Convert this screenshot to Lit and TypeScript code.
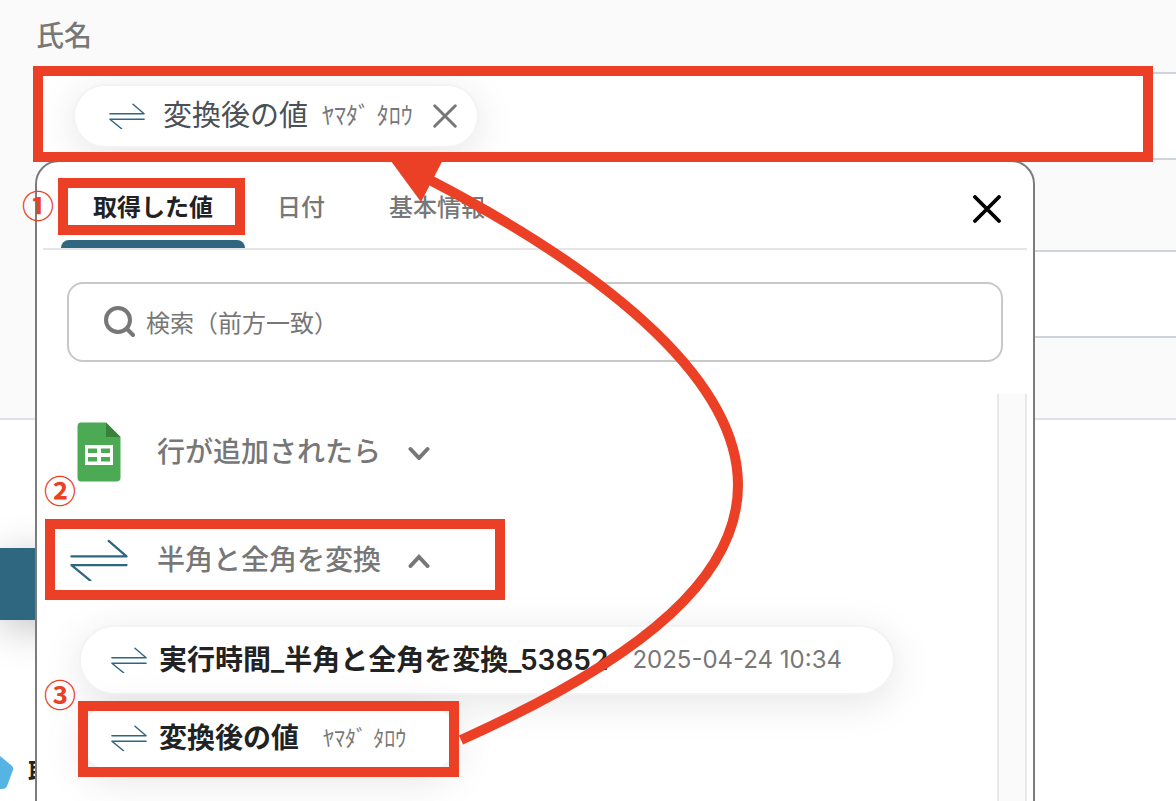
import { LitElement, html, css, svg } from "lit";
import { customElement, property } from "lit/decorators.js";
import { classMap } from "lit/directives/class-map.js";

@customElement("swap-icon")
class SwapIcon extends LitElement {
  static styles = css`
    :host { display: inline-flex; flex: none; }
    svg { display: block; width: 100%; height: auto; }
    path { fill: none; stroke: #2f6680; stroke-width: 2.4; stroke-linecap: round; stroke-linejoin: round; }
  `;
  render() {
    return html`<svg viewBox="0 0 60 44" aria-hidden="true">
      <path d="M1.500 18H58.500L40 2M58.500 27H1.500L21 43" />
    </svg>`;
  }
}

@customElement("value-pill")
class ValuePill extends LitElement {
  @property() name = "";
  @property() sample = "";
  @property({ type: Boolean }) kana = false;
  static styles = css`
    :host { display: inline-flex; }
    .pill {
      display: flex; align-items: center; box-sizing: border-box; height: 70px;
      padding: 0 51px 0 30px; border: 2px solid #f3f3f3; border-radius: 35px; background: #fff;
      box-shadow: 0 8px 40px rgba(0, 0, 0, 0.1); font: inherit; color: #222; cursor: pointer; white-space: pre;
    }
    .icon { width: 36px; margin-right: 12px; }
    .name { font-size: 28px; font-weight: 600; }
    .sample { font-size: 24px; color: #777; margin-left: 24px; }
    .kana { font-size: 22px; }
  `;
  render() {
    return html`<button class="pill" type="button">
      <swap-icon class="icon"></swap-icon><span class="name">${this.name}</span><span class=${classMap({ sample: true, kana: this.kana })}>${this.sample}</span>
    </button>`;
  }
}

@customElement("app-root")
class AppRoot extends LitElement {
  static styles = css`
    :host {
      display: block; position: relative; min-height: 100vh; overflow: hidden; background: #fff; color: #777;
      font-family: Inter, "Noto Sans CJK JP", sans-serif; font-size: 24px; line-height: 36px;
    }
    * { box-sizing: border-box; }
    button { font: inherit; color: inherit; background: none; border: 0; padding: 0; cursor: pointer; }
    svg { display: block; flex: none; }
    .form { background: #fafafa; border-bottom: 2px solid #dee2e6; padding: 16px 0 80px 35px; }
    .label { display: block; font-size: 28px; line-height: 40px; font-weight: 500; margin-bottom: 16px; padding-left: 1px; }
    .field {
      height: 88px; margin-right: -40px; border: 2px solid #ced4da; border-radius: 12px; background: #fff;
      display: flex; align-items: center; overflow: hidden;
    }
    .second { margin-top: 90px; width: calc(100% + 40px); }
    .chip {
      display: flex; align-items: center; height: 64px; margin-left: 36px; padding: 0 20px 0 34px;
      border: 2px solid #f3f3f3; border-radius: 32px; background: #fff; box-shadow: 0 8px 40px rgba(0, 0, 0, 0.1);
      white-space: pre;
    }
    .chip-icon { width: 36px; margin-right: 18px; }
    .chip-name { font-size: 29px; color: #495057; }
    .chip-sample { margin: 0 20px 0 14px; }
    .save {
      display: block; width: 80px; height: 72px; margin-top: 128px; border-radius: 0 8px 8px 0; background: #2f6680;
      box-shadow: 0 8px 40px rgba(0, 0, 0, 0.24);
    }
    .step { display: flex; align-items: center; gap: 14px; margin-top: 132px; color: #222; font-weight: 700; white-space: nowrap; }
    .gem { margin-left: -20px; }

    .popup {
      position: absolute; top: 160px; bottom: -40px; left: 35px; right: 141px; display: flex; flex-direction: column;
      border: 2px solid #7c7c7c; border-radius: 24px; background: #fff; padding: 0 6px; overflow: hidden;
    }
    .tabs { display: flex; align-items: stretch; height: 88px; border-bottom: 2px solid #e5e5e5; padding-left: 18px; flex: none; }
    .tab { position: relative; padding: 6px 32px 0; font-weight: 500; white-space: nowrap; }
    .tab.active { color: #222; font-weight: 600; }
    .tab.active::after {
      content: ""; position: absolute; left: 0; right: 0; bottom: 0; height: 8px; background: #2f6680; border-radius: 8px 8px 0 0;
    }
    .close { margin: 8px 26px 0 auto; }
    .search {
      display: flex; align-items: center; gap: 11px; height: 80px; margin: 32px 24px; padding: 0 34px;
      border: 2px solid #c8c8c8; border-radius: 16px; flex: none;
    }
    .search input { flex: 1; min-width: 0; border: 0; outline: 0; padding: 4px 0 0; font: inherit; color: #222; background: none; }
    .search input::placeholder { color: #777; opacity: 1; }
    .body { flex: 1; display: flex; min-height: 0; }
    .list { flex: 1; padding: 22px 0 0 25px; display: flex; flex-direction: column; align-items: flex-start; }
    .scrollbar { width: 30px; background: #fafafa; border: solid #e8e8e8; border-width: 0 2px; }
    .group { display: flex; align-items: center; height: 72px; font-size: 28px; font-weight: 500; white-space: nowrap; }
    .group + .group { margin-top: 36px; }
    .group-icon { width: 62px; padding: 0 2px; margin-right: 27px; display: flex; justify-content: center; }
    .group-name { margin-right: 24px; }
    .pills { display: flex; flex-direction: column; align-items: flex-start; gap: 8px; padding: 29px 0 0 11px; }

    .notes { position: absolute; inset: 0; pointer-events: none; }
    .marks { position: absolute; left: 0; top: 0; }
    .num { position: absolute; font-family: "Noto Sans CJK JP", sans-serif; font-size: 32px; line-height: 32px; font-weight: 700; color: #eb4025; }
    .n1 { left: 22px; top: 188px; }
    .n2 { left: 44px; top: 473px; }
    .n3 { left: 44px; top: 677px; }
  `;

  private cross(size: number, color: string, width: number) {
    return html`<svg width=${size} height=${size} viewBox="0 0 28 28" aria-hidden="true">
      ${svg`<path d="M2 2L26 26M26 2L2 26" fill="none" stroke=${color} stroke-width=${width} stroke-linecap="round" />`}
    </svg>`;
  }

  render() {
    return html`
      <main>
        <section class="form">
          <span class="label">氏名</span>
          <div class="field">
            <div class="chip">
              <swap-icon class="chip-icon"></swap-icon><span class="chip-name">変換後の値</span><span class="chip-sample">ﾔﾏﾀﾞ ﾀﾛｳ</span><button type="button" aria-label="削除">${this.cross(24, "#777", 3.4)}</button>
            </div>
          </div>
          <input class="field second" type="text" aria-label="値" />
        </section>
        <button class="save" type="button" aria-label="保存"></button>
        <div class="step">
          <svg class="gem" width="34" height="40" viewBox="0 0 34 40" aria-hidden="true">
            <path d="M14 4Q17 2 20 4L31 13Q34 15 33 18L27 34Q26 37 22 37H8Q4 37 3 34L0 18Z" fill="#56b4e4" />
          </svg>
          <span>取得した値</span>
        </div>
      </main>

      <section class="popup">
        <nav class="tabs">
          <button class="tab active" type="button">取得した値</button>
          <button class="tab" type="button">日付</button>
          <button class="tab" type="button">基本情報</button>
          <button class="close" type="button" aria-label="閉じる">${this.cross(28, "#000", 3.8)}</button>
        </nav>
        <label class="search">
          <svg width="32" height="32" viewBox="0 0 32 32" aria-hidden="true">
            <g fill="none" stroke="#777" stroke-width="4" stroke-linecap="round"><circle cx="15" cy="14" r="12" /><path d="M24 23L30 29" /></g>
          </svg>
          <input type="text" placeholder="検索（前方一致）" aria-label="検索" />
        </label>
        <div class="body">
          <div class="list">
            <button class="group" type="button">
              <span class="group-icon">
                <svg width="44" height="60" viewBox="0 0 44 60" aria-hidden="true">
                  <path d="M4 .5H29L43.500 15V55.500Q43.500 59.500 39.500 59.500H4Q.5 59.500 .5 55.500V4.500Q.5 .5 4 .5Z" fill="#4caa54" />
                  <path d="M29 .5L43.500 15H29Z" fill="#37813a" />
                  <path d="M8 23H36V43H8ZM11 26.500V31H20V26.500ZM24 26.500V31H33V26.500ZM11 35V39.500H20V35ZM24 35V39.500H33V35Z" fill="#fff" fill-rule="evenodd" />
                </svg>
              </span>
              <span class="group-name">行が追加されたら</span>
              <svg width="28" height="16" viewBox="0 0 28 16" aria-hidden="true"><path d="M5.500 5L14 14L22.500 5" fill="none" stroke="#777" stroke-width="4" stroke-linecap="round" /></svg>
            </button>
            <button class="group" type="button">
              <swap-icon class="group-icon"></swap-icon>
              <span class="group-name">半角と全角を変換</span>
              <svg width="28" height="16" viewBox="0 0 28 16" aria-hidden="true"><path d="M5.500 14L14 5L22.500 14" fill="none" stroke="#777" stroke-width="4" stroke-linecap="round" /></svg>
            </button>
            <div class="pills">
              <value-pill name="実行時間_半角と全角を変換_53852" sample="2025-04-24 10:34"></value-pill>
              <value-pill name="変換後の値" sample="ﾔﾏﾀﾞ ﾀﾛｳ" kana></value-pill>
            </div>
          </div>
          <div class="scrollbar"></div>
        </div>
      </section>

      <div class="notes">
        <svg class="marks" width="1176" height="801" viewBox="0 0 1176 801" aria-hidden="true">
          <g fill="none" stroke="#eb4025" stroke-width="10">
            <rect x="38" y="71" width="1110" height="86" />
            <rect x="63" y="183" width="177" height="47" />
            <rect x="50" y="524" width="450" height="71" />
            <rect x="83" y="706" width="371" height="66" />
            <path d="M430 180C620 279 738 385 738 485C738 574 650 655 461 740" />
          </g>
          <path d="M388 157L421 202L446 154Z" fill="#eb4025" />
        </svg>
        <span class="num n1">①</span>
        <span class="num n2">②</span>
        <span class="num n3">③</span>
      </div>
    `;
  }
}
